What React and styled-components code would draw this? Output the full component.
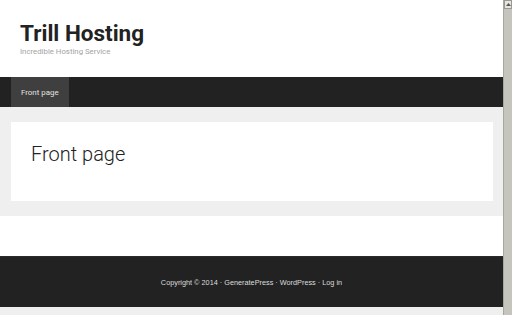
import styled, { createGlobalStyle } from "styled-components";

const GlobalStyle = createGlobalStyle`
  html, body {
    margin: 0;
    padding: 0;
    background: #efefef;
    overflow: hidden;
  }
  * {
    box-sizing: border-box;
  }
`;

export default function App() {
  return (
    <>
      <GlobalStyle />
      <Viewport>
        <Page>
          <Header>
            <SiteTitle>Trill Hosting</SiteTitle>
            <Tagline>Incredible Hosting Service</Tagline>
          </Header>
          <Nav>
            <NavItem $current>Front page</NavItem>
          </Nav>
          <Main>
            <Card>
              <PageTitle>Front page</PageTitle>
            </Card>
          </Main>
          <Spacer />
          <Footer>
            Copyright © 2014 · GeneratePress · WordPress · Log in
          </Footer>
        </Page>
        <Scrollbar>
          <ScrollButton>
            <svg width="5" height="3" viewBox="0 0 5 3">
              <path d="M0 3 L2.5 0 L5 3 Z" fill="#555" />
            </svg>
          </ScrollButton>
        </Scrollbar>
      </Viewport>
    </>
  );
}

const Viewport = styled.div`
  display: flex;
  width: 512px;
  height: 315px;
  overflow: hidden;
`;

const Page = styled.div`
  flex: 1;
  display: flex;
  flex-direction: column;
  background: #efefef;
  font-family: Roboto, "Liberation Sans", sans-serif;
`;

const Header = styled.header`
  background: #fff;
  height: 77px;
  padding: 20px 20px 0;
`;

const SiteTitle = styled.div`
  font-size: 22.5px;
  font-weight: 700;
  color: #222;
  line-height: 27px;
`;

const Tagline = styled.div`
  font-size: 7.8px;
  color: #a3a3a3;
  line-height: 10px;
`;

const Nav = styled.nav`
  background: #222;
  height: 30px;
  display: flex;
  padding-left: 11px;
`;

const NavItem = styled.div`
  display: flex;
  align-items: center;
  padding: 0 10px;
  height: 100%;
  font-size: 7.9px;
  color: #e2e2e2;
  background: ${(p) => (p.$current ? "#3f3f3f" : "transparent")};
`;

const Main = styled.main`
  padding: 15px 10px 15px 11px;
  background: #efefef;
`;

const Card = styled.article`
  background: #fff;
  height: 79px;
  padding: 20px 20px;
`;

const PageTitle = styled.h1`
  margin: 0;
  font-size: 20px;
  font-weight: 300;
  color: #222;
  line-height: 24px;
`;

const Spacer = styled.div`
  background: #fff;
  height: 40px;
`;

const Footer = styled.footer`
  background: #222;
  height: 51px;
  display: flex;
  align-items: center;
  justify-content: center;
  font-family: "Liberation Sans", Arial, sans-serif;
  font-size: 7.3px;
  color: #dcdcdc;
  border-top: 1px solid #2a2a2a;
`;

const Scrollbar = styled.div`
  width: 9px;
  height: 100%;
  background: #c6c5bd;
  border-left: 1px solid #a8a79f;
  display: flex;
  flex-direction: column;
`;

const ScrollButton = styled.div`
  height: 9px;
  background: #e6e5e0;
  border: 1px solid #9a998f;
  display: flex;
  align-items: center;
  justify-content: center;
`;
